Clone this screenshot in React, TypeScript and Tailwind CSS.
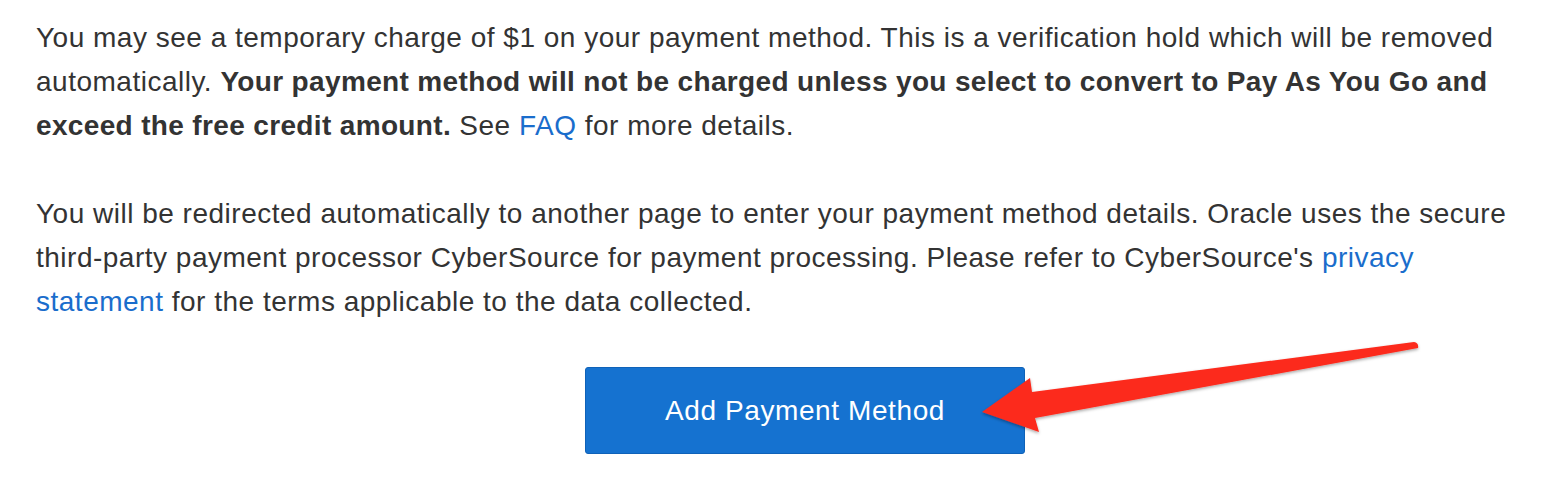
import React from 'react';

const Arrow = () => (
  <svg
    className="absolute left-0 top-0 pointer-events-none"
    width="1548"
    height="490"
    viewBox="0 0 1548 490"
  >
    <defs>
      <filter id="sh" x="-10%" y="-30%" width="120%" height="160%">
        <feDropShadow dx="0" dy="1.5" stdDeviation="1.5" floodColor="#000" floodOpacity="0.35" />
      </filter>
    </defs>
    <path
      d="M982 412 L1030 378 L1032 392 L1414 342 Q1419 343 1418 348 L1035 418 L1039 432 Z"
      fill="#fc2a1c"
      filter="url(#sh)"
    />
  </svg>
);

export default function App() {
  return (
    <div className="relative w-[1548px] h-[490px] bg-white text-[#333333] font-['Liberation_Sans',Arial,sans-serif] text-[28px] leading-[44px] tracking-[0.5px]">
      <div className="pl-[36px] pt-[16px] whitespace-nowrap">
        <p className="mb-[44px]">
          You may see a temporary charge of $1 on your payment method. This is a verification hold which will be removed
          <br />
          automatically.{' '}
          <b className="tracking-[0.35px]">Your payment method will not be charged unless you select to convert to Pay As You Go and</b>
          <br />
          <b className="tracking-[0.35px]">exceed the free credit amount.</b> See <a className="text-[#1a6dcc]">FAQ</a> for more
          details.
        </p>
        <p>
          You will be redirected automatically to another page to enter your payment method details. Oracle uses the secure
          <br />
          third-party payment processor CyberSource for payment processing. Please refer to CyberSource's{' '}
          <a className="text-[#1a6dcc]">privacy</a>
          <br />
          <a className="text-[#1a6dcc]">statement</a> for the terms applicable to the data collected.
        </p>
      </div>
      <div className="mt-[43px] pl-[585px]">
        <button className="w-[440px] h-[87px] rounded-[3px] bg-[#1572d0] text-white text-[28px] tracking-[0.6px] border border-[#0f62b8]">
          Add Payment Method
        </button>
      </div>
      <Arrow />
    </div>
  );
}
